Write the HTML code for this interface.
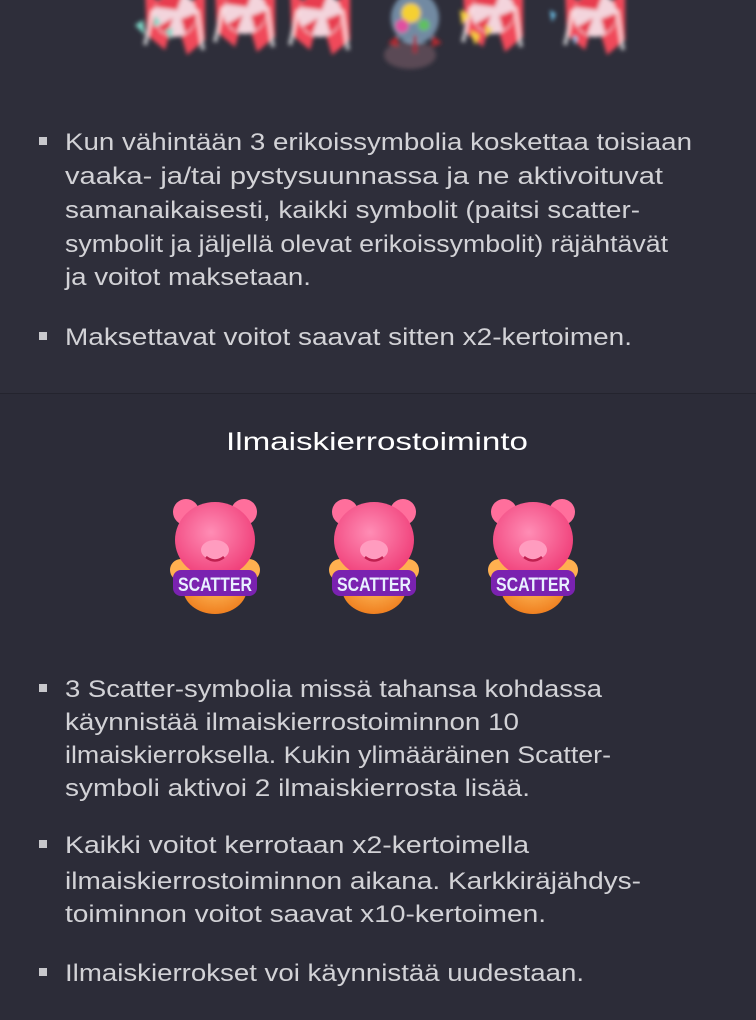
<!DOCTYPE html>
<html><head><meta charset="utf-8"><style>
html,body{margin:0;padding:0;background:#2c2c38;}
svg{display:block}
text{font-family:"Liberation Sans",sans-serif;fill:#d2d2d6;font-size:24px}
</style></head><body>
<svg width="756" height="1020" viewBox="0 0 756 1020" xmlns="http://www.w3.org/2000/svg">
<defs>
<filter id="b" x="-30%" y="-30%" width="160%" height="160%"><feGaussianBlur stdDeviation="2"/></filter>
<radialGradient id="hd" cx="45%" cy="40%" r="60%"><stop offset="0" stop-color="#ff8db5"/><stop offset="1" stop-color="#f0407a"/></radialGradient>
<radialGradient id="bd" cx="50%" cy="40%" r="60%"><stop offset="0" stop-color="#ffc060"/><stop offset="1" stop-color="#f08020"/></radialGradient>
<g id="candy">
 <path d="M-30,-25 L0,0 L-10,35 L-28,20 Z" fill="#f04a5a"/>
 <path d="M30,-25 L0,0 L12,40 L30,25 Z" fill="#f04a5a"/>
 <circle r="22" fill="#f3d4dc"/>
 <path d="M-20,-8 A22,22 0 0 1 8,-21 L2,-5 Z M10,18 A22,22 0 0 0 22,-2 L6,4 Z M-18,12 L-2,3 L-8,20 Z" fill="#e83c50"/>
 <path d="M-22,-5 L-30,30 M22,-5 L28,35" stroke="#fff" stroke-width="4" opacity=".7"/>
</g>
<g id="bear">
 <ellipse cx="0" cy="88" rx="32" ry="26" fill="url(#bd)"/>
 <circle cx="-34" cy="70" r="11" fill="#ffb050"/>
 <circle cx="34" cy="70" r="11" fill="#ffb050"/>
 <circle cx="-29" cy="12" r="13" fill="#ff6f9c"/>
 <circle cx="29" cy="12" r="13" fill="#ff6f9c"/>
 <ellipse cx="0" cy="40" rx="40" ry="38" fill="url(#hd)"/>
 <ellipse cx="0" cy="50" rx="14" ry="10" fill="#ff9cbf"/>
 <path d="M-9,57 Q0,64 9,57" stroke="#c02050" stroke-width="2.5" fill="none"/>
 <rect x="-42" y="70" width="84" height="26" rx="8" fill="#7a22b0"/>
 <text x="0" y="91" text-anchor="middle" style="font-size:19px;font-weight:bold;fill:#e8f0ff" textLength="74" lengthAdjust="spacingAndGlyphs">SCATTER</text>
</g>
</defs>
<rect width="756" height="393" fill="#2e2e3a"/>
<rect y="393" width="756" height="1" fill="#24242e"/>
<g filter="url(#b)">
 <ellipse cx="410" cy="55" rx="26" ry="14" fill="#5a4a55"/>
 <use href="#candy" x="175" y="15"/>
 <use href="#candy" x="245" y="12"/>
 <use href="#candy" x="320" y="15"/>
 <use href="#candy" x="493" y="12"/>
 <use href="#candy" x="595" y="15"/>
 <path d="M135,25 l8,-5 l2,15 z M165,30 l8,-2 l-2,12z M155,15 l6,8 l-8,4z" fill="#7fd8c8"/>
 <path d="M460,10 l10,5 l-8,10z M470,30 l10,5 l-5,10z M485,25 l8,4 l-6,8z" fill="#f6d03a"/>
 <path d="M550,10 l6,4 l-4,8z M573,35 l5,3 l-4,7z" fill="#70c8f0"/>
 <path d="M398,35 l-10,8 l10,4z M432,35 l10,8 l-10,4z" fill="#b02a30"/>
 <ellipse cx="415" cy="18" rx="24" ry="26" fill="#9fc8e8" opacity=".6"/>
 <circle cx="411" cy="13" r="10" fill="#f5d030"/>
 <circle cx="402" cy="26" r="7" fill="#e050a0"/>
 <circle cx="424" cy="25" r="6" fill="#60c060"/>
 <rect x="413" y="35" width="4" height="18" fill="#a03040"/>
</g>
<g>
<rect x="39" y="137" width="8" height="8" fill="#c8c8cc"/>
<text x="65" y="150" textLength="627" lengthAdjust="spacingAndGlyphs">Kun vähintään 3 erikoissymbolia koskettaa toisiaan</text>
<text x="65" y="184" textLength="598" lengthAdjust="spacingAndGlyphs">vaaka- ja/tai pystysuunnassa ja ne aktivoituvat</text>
<text x="65" y="218" textLength="575" lengthAdjust="spacingAndGlyphs">samanaikaisesti, kaikki symbolit (paitsi scatter-</text>
<text x="65" y="252" textLength="603" lengthAdjust="spacingAndGlyphs">symbolit ja jäljellä olevat erikoissymbolit) räjähtävät</text>
<text x="65" y="285" textLength="246" lengthAdjust="spacingAndGlyphs">ja voitot maksetaan.</text>
<rect x="39" y="332" width="8" height="8" fill="#c8c8cc"/>
<text x="65" y="345" textLength="567" lengthAdjust="spacingAndGlyphs">Maksettavat voitot saavat sitten x2-kertoimen.</text>
</g>
<text x="226" y="450" style="fill:#ffffff;font-size:25px" textLength="302" lengthAdjust="spacingAndGlyphs">Ilmaiskierrostoiminto</text>
<use href="#bear" x="215" y="500"/>
<use href="#bear" x="374" y="500"/>
<use href="#bear" x="533" y="500"/>
<g>
<rect x="39" y="684" width="8" height="8" fill="#c8c8cc"/>
<text x="65" y="697" textLength="537" lengthAdjust="spacingAndGlyphs">3 Scatter-symbolia missä tahansa kohdassa</text>
<text x="65" y="730" textLength="454" lengthAdjust="spacingAndGlyphs">käynnistää ilmaiskierrostoiminnon 10</text>
<text x="65" y="763" textLength="546" lengthAdjust="spacingAndGlyphs">ilmaiskierroksella. Kukin ylimääräinen Scatter-</text>
<text x="65" y="796" textLength="465" lengthAdjust="spacingAndGlyphs">symboli aktivoi 2 ilmaiskierrosta lisää.</text>
<rect x="39" y="840" width="8" height="8" fill="#c8c8cc"/>
<text x="65" y="853" textLength="464" lengthAdjust="spacingAndGlyphs">Kaikki voitot kerrotaan x2-kertoimella</text>
<text x="65" y="889" textLength="576" lengthAdjust="spacingAndGlyphs">ilmaiskierrostoiminnon aikana. Karkkiräjähdys-</text>
<text x="65" y="922" textLength="481" lengthAdjust="spacingAndGlyphs">toiminnon voitot saavat x10-kertoimen.</text>
<rect x="39" y="968" width="8" height="8" fill="#c8c8cc"/>
<text x="65" y="981" textLength="519" lengthAdjust="spacingAndGlyphs">Ilmaiskierrokset voi käynnistää uudestaan.</text>
</g>
</svg>
</body></html>
